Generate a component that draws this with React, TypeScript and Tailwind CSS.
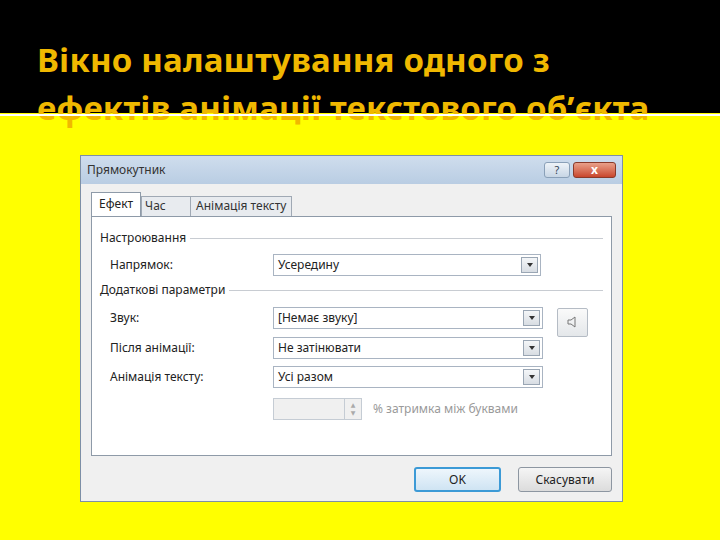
export default function App() {
  const f = { fontFamily: '"Noto Sans", "DejaVu Sans", sans-serif' };
  const Combo = ({ v, w = "w-[270px]" }: { v: string; w?: string }) => (
    <div className={`${w} h-[22px] border border-[#a9b4c2] bg-white flex items-center justify-between pl-1 pr-[2px]`}>
      <span className="text-[12px] text-[#222]">{v}</span>
      <div className="w-[17px] h-[16px] border border-[#9aa6b4] bg-gradient-to-b from-[#f4f6f8] to-[#d8dde3] flex items-center justify-center">
        <div className="w-0 h-0 border-l-[3px] border-r-[3px] border-t-[4px] border-l-transparent border-r-transparent border-t-[#333]" />
      </div>
    </div>
  );
  const Row = ({ label, v }: { label: string; v: string }) => (
    <div className="flex items-center h-[29px]">
      <span className="w-[181px] pl-[18px] text-[12px] text-[#222]">{label}</span>
      <Combo v={v} />
    </div>
  );
  return (
    <div className="relative w-[720px] h-[540px] bg-[#ffff00] overflow-hidden" style={f}>
      <div className="absolute left-0 top-0 w-[720px] h-[113px] bg-black" />
      <div className="absolute left-0 top-[114px] w-[720px] h-[2px] bg-white z-10" />
      <div className="relative h-[155px] pl-[37px] pt-[36px] text-[33px] font-bold leading-[48px] text-[#f0b800] tracking-[0.2px]">
        <div>Вікно налаштування одного з</div>
        <div>ефектів анімації текстового об’єкта</div>
      </div>
      <div className="relative ml-[80px] w-[543px] h-[347px] border border-[#7d8fa6] bg-[#dfe7f1] flex flex-col">
        <div className="h-[28px] flex items-center justify-between px-[6px] bg-gradient-to-b from-[#cfdded] to-[#b9cde3]">
          <span className="text-[12px] text-[#333]">Прямокутник</span>
          <div className="flex gap-[3px]">
            <div className="w-[26px] h-[16px] rounded-[3px] border border-[#8aa0b8] bg-gradient-to-b from-[#eef3f8] to-[#c8d6e5] text-[11px] leading-[14px] text-center text-[#345]">?</div>
            <div className="w-[43px] h-[16px] rounded-[3px] border border-[#8a3a2a] bg-gradient-to-b from-[#e8a08a] to-[#c8452c] text-[12px] leading-[14px] text-center text-white font-bold">x</div>
          </div>
        </div>
        <div className="flex-1 bg-[#f0f0f0] px-[10px] pt-[10px] flex flex-col">
          <div className="flex items-end h-[22px]">
            <div className="h-[24px] px-[7px] bg-white border border-b-0 border-[#8e9aa8] text-[12px] leading-[22px] text-[#222]">Ефект</div>
            <div className="h-[20px] px-[3px] w-[50px] bg-[#e8ebef] border border-b-0 border-[#a0a9b4] text-[12px] leading-[18px] text-[#333]">Час</div>
            <div className="h-[20px] px-[5px] bg-[#e8ebef] border border-b-0 border-l-0 border-[#a0a9b4] text-[12px] leading-[18px] text-[#333]">Анімація тексту</div>
          </div>
          <div className="h-[240px] bg-white border border-[#8e9aa8] px-[8px] pt-[12px] flex flex-col">
            <div className="flex items-center gap-[4px] h-[18px]">
              <span className="text-[12px] text-[#222]">Настроювання</span>
              <div className="flex-1 h-px bg-[#c8ccd2]" />
            </div>
            <div className="flex items-center h-[36px]">
              <span className="w-[173px] pl-[10px] text-[12px] text-[#222]">Напрямок:</span>
              <Combo v="Усередину" w="w-[268px]" />
            </div>
            <div className="flex items-center gap-[4px] h-[18px] mt-[-2px]">
              <span className="text-[12px] text-[#222]">Додаткові параметри</span>
              <div className="flex-1 h-px bg-[#c8ccd2]" />
            </div>
            <div className="flex flex-col -ml-[8px] mt-[4px]">
              <div className="flex items-center h-[30px]">
                <span className="w-[181px] pl-[18px] text-[12px] text-[#222]">Звук:</span>
                <Combo v="[Немає звуку]" />
                <div className="ml-[14px] w-[31px] h-[29px] mt-[8px] border border-[#b5bcc5] rounded-[2px] bg-gradient-to-b from-[#fafafa] to-[#e4e7ea] flex items-center justify-center">
                  <svg width="14" height="14" viewBox="0 0 14 14"><path d="M2 5h3l4-3v10l-4-3H2z" fill="none" stroke="#777" strokeWidth="1" /></svg>
                </div>
              </div>
              <Row label="Після анімації:" v="Не затінювати" />
              <Row label="Анімація тексту:" v="Усі разом" />
              <div className="flex items-center h-[36px]">
                <span className="w-[181px]" />
                <div className="w-[89px] h-[22px] border border-[#c5ccd4] bg-[#f0f0f0] flex justify-end">
                  <div className="w-[17px] border-l border-[#c5ccd4] flex flex-col items-center justify-center text-[6px] text-[#aaa] leading-[8px]"><span>▲</span><span>▼</span></div>
                </div>
                <span className="ml-[11px] text-[12px] text-[#9a9a9a]">% затримка між буквами</span>
              </div>
            </div>
          </div>
          <div className="flex justify-end gap-[17px] mt-[11px] pr-0">
            <div className="w-[87px] h-[25px] rounded-[3px] border-2 border-[#3c9ad6] bg-gradient-to-b from-[#eef6fc] to-[#cfe4f3] text-[12px] leading-[21px] text-center text-[#222]">OK</div>
            <div className="w-[94px] h-[25px] rounded-[3px] border border-[#8d96a1] bg-gradient-to-b from-[#f5f5f5] to-[#dcdcdc] text-[12px] leading-[23px] text-center text-[#222]">Скасувати</div>
          </div>
        </div>
      </div>
    </div>
  );
}
